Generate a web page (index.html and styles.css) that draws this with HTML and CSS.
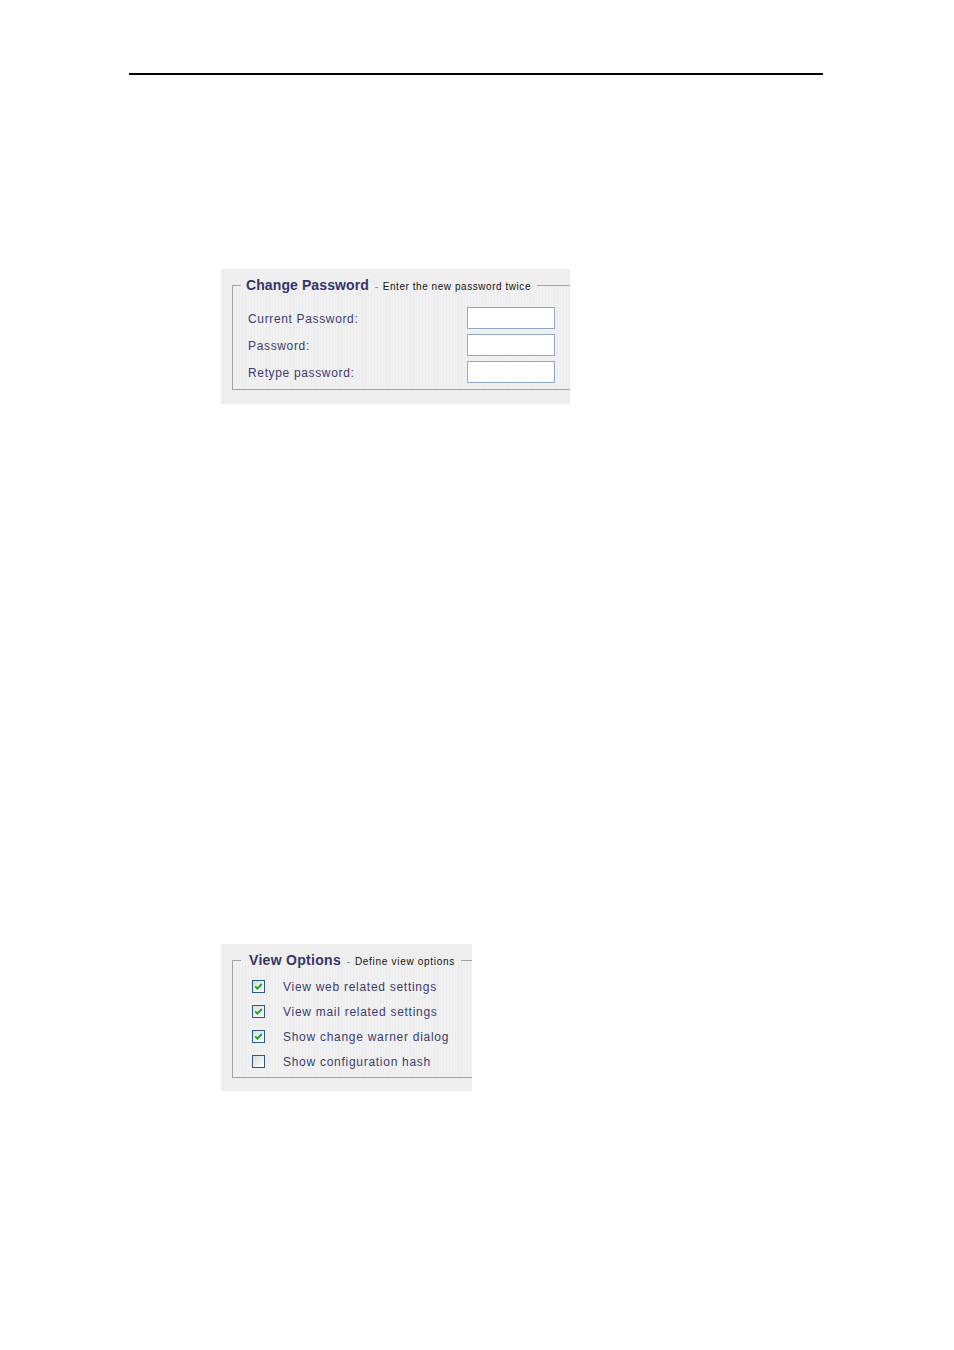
FILE: index.html
```html
<!DOCTYPE html>
<html>
<head>
<meta charset="utf-8">
<link rel="stylesheet" href="styles.css">
</head>
<body>
<div class="page">
  <div class="rule"></div>

  <div class="panel panel-pass">
    <fieldset class="fs">
      <legend class="lg lg-pass"><span class="lg-title">Change Password</span><span class="lg-dash"> - </span><span class="lg-sub">Enter the new password twice</span></legend>
      <div class="form">
        <div class="frow"><span class="flabel">Current Password:</span><span class="finput"></span></div>
        <div class="frow"><span class="flabel">Password:</span><span class="finput"></span></div>
        <div class="frow"><span class="flabel">Retype password:</span><span class="finput"></span></div>
      </div>
    </fieldset>
  </div>

  <div class="panel panel-view">
    <fieldset class="fs fs-view">
      <legend class="lg lg-view"><span class="lg-title lg-title-view">View Options</span><span class="lg-dash"> - </span><span class="lg-sub lg-sub-view">Define view options</span></legend>
      <div class="opts">
        <div class="orow"><span class="cb"><svg viewBox="0 0 11 11" width="11" height="11"><path d="M2.2 5.4 L4.4 7.6 L8.8 3.0" fill="none" stroke="#21a321" stroke-width="1.9"/></svg></span><span class="olabel">View web related settings</span></div>
        <div class="orow"><span class="cb"><svg viewBox="0 0 11 11" width="11" height="11"><path d="M2.2 5.4 L4.4 7.6 L8.8 3.0" fill="none" stroke="#21a321" stroke-width="1.9"/></svg></span><span class="olabel">View mail related settings</span></div>
        <div class="orow"><span class="cb"><svg viewBox="0 0 11 11" width="11" height="11"><path d="M2.2 5.4 L4.4 7.6 L8.8 3.0" fill="none" stroke="#21a321" stroke-width="1.9"/></svg></span><span class="olabel">Show change warner dialog</span></div>
        <div class="orow"><span class="cb"></span><span class="olabel">Show configuration hash</span></div>
      </div>
    </fieldset>
  </div>
</div>
</body>
</html>
```
FILE: styles.css
```css
html, body {
  margin: 0;
  padding: 0;
  background: #ffffff;
}
.page {
  padding-top: 73px;
  font-family: "Liberation Sans", Arial, sans-serif;
}
.rule {
  margin-left: 129px;
  width: 694px;
  height: 2px;
  background: #000000;
}
.panel {
  margin-left: 221px;
  background: #eeeeee;
  overflow: hidden;
  box-sizing: border-box;
}
.panel-pass {
  margin-top: 194px;
  width: 349px;
  height: 135px;
  padding-top: 8px;
}
.panel-view {
  margin-top: 540px;
  width: 251px;
  height: 147px;
  padding-top: 8px;
}
.fs {
  margin: 0 0 0 11px;
  width: 400px;
  padding: 0 0 6px 8px;
  border: 1px solid #a3a3a3;
  border-right: none;
  background: repeating-linear-gradient(90deg, #ececee 0 1px, #f1f1f1 1px 3px);
  box-sizing: border-box;
}
.lg {
  padding: 0 6px 0 5px;
  height: 16px;
  line-height: 16px;
  white-space: nowrap;
}
.lg-view {
  padding-left: 8px;
}
.lg-title {
  font-size: 14px;
  font-weight: bold;
  color: #35356a;
  letter-spacing: 0.1px;
}
.lg-title-view {
  letter-spacing: 0.3px;
}
.lg-dash {
  font-size: 10px;
  color: #888888;
  padding: 0 2px 0 3px;
}
.lg-sub {
  font-size: 10px;
  color: #111111;
  letter-spacing: 0.55px;
}
.lg-sub-view {
  letter-spacing: 0.7px;
}
.form {
  padding: 14px 0 0 7px;
  display: flex;
  flex-direction: column;
  gap: 5px;
}
.frow {
  display: grid;
  grid-template-columns: 219px 88px;
  align-items: center;
  height: 22px;
}
.flabel {
  font-size: 12px;
  color: #3c3c6e;
  letter-spacing: 0.65px;
  position: relative;
  top: 1px;
}
.finput {
  display: block;
  height: 22px;
  box-sizing: border-box;
  background: #ffffff;
  border: 1px solid #8fa9c7;
}
.fs-view {
  padding-bottom: 3px;
}
.opts {
  padding: 6px 0 0 11px;
}
.orow {
  height: 25px;
  display: flex;
  align-items: center;
}
.cb {
  width: 13px;
  height: 13px;
  box-sizing: border-box;
  border: 1px solid #2a5a87;
  background: linear-gradient(135deg, #dcdcd6 0%, #f4f4f0 70%, #ffffff 100%);
  display: flex;
  align-items: center;
  justify-content: center;
  flex: none;
}
.cb svg {
  display: block;
}
.olabel {
  margin-left: 18px;
  font-size: 12px;
  color: #3c3c6e;
  letter-spacing: 0.72px;
  white-space: nowrap;
}
```
